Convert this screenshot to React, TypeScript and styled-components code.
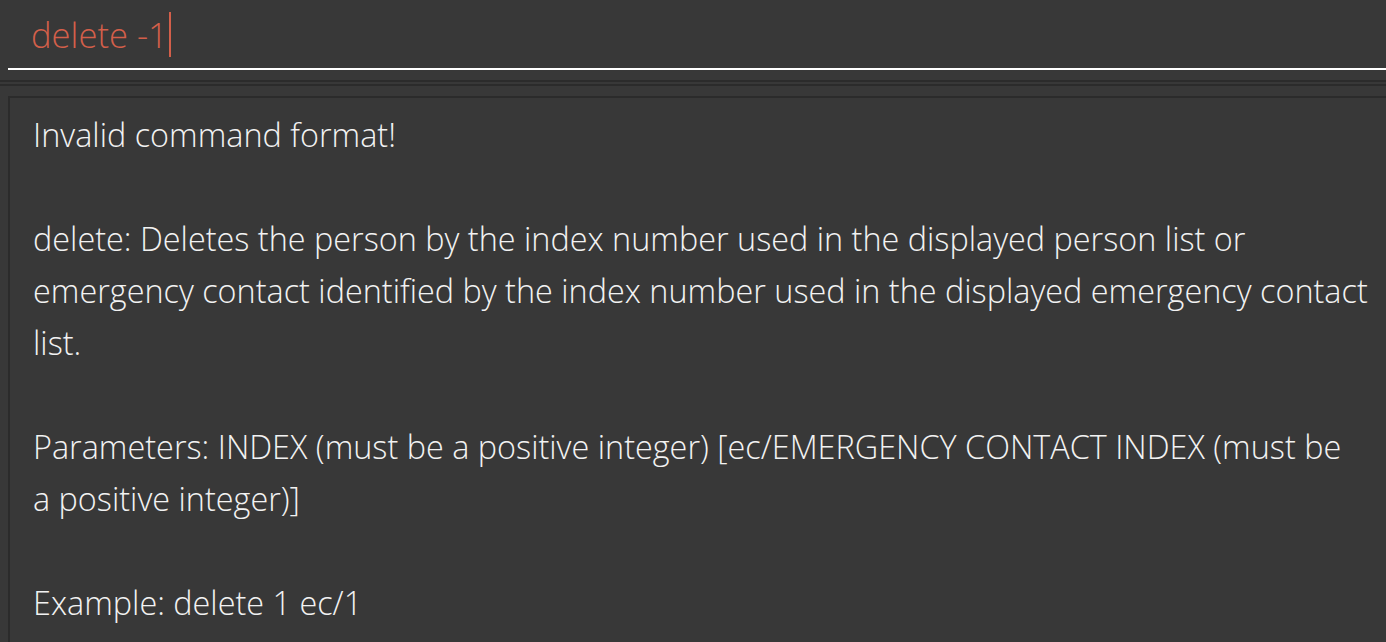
import React from "react";
import styled, { createGlobalStyle } from "styled-components";

const Global = createGlobalStyle`
  html, body { margin: 0; padding: 0; background: #383838; }
  body { width: 1386px; height: 642px; overflow: hidden; }
`;

const Page = styled.div`
  width: 1386px;
  height: 642px;
  background: #383838;
  display: flex;
  flex-direction: column;
  overflow: hidden;
`;

const CommandBar = styled.div`
  height: 68px;
  margin-left: 8px;
  border-bottom: 2px solid #ffffff;
  display: flex;
  align-items: center;
  padding-left: 23px;
  box-sizing: content-box;
`;

const CommandText = styled.span`
  font-family: "Open Sans", "Liberation Sans", sans-serif;
  font-weight: 300;
  font-size: 34.6px;
  color: #d35f4a;
  display: flex;
  align-items: center;
`;

const Caret = styled.span`
  width: 2px;
  height: 45px;
  background: #d35f4a;
  margin-left: 1px;
`;

const Divider = styled.div<{ $gap: number }>`
  height: 2px;
  background: #2b2b2b;
  margin-top: ${(p) => p.$gap}px;
`;

const ResultBox = styled.div`
  margin-top: 10px;
  margin-left: 8px;
  flex: 1;
  border-top: 2px solid #2b2b2b;
  border-left: 2px solid #2b2b2b;
  padding: 10px 0 0 23px;
`;

const ResultText = styled.div`
  font-family: "Open Sans", "Liberation Sans", sans-serif;
  font-weight: 300;
  font-size: 32.4px;
  line-height: 52px;
  color: #f2f2f2;
  white-space: pre-wrap;
  width: 1350px;
`;

const message = `Invalid command format!

delete: Deletes the person by the index number used in the displayed person list or emergency contact identified by the index number used in the displayed emergency contact list.

Parameters: INDEX (must be a positive integer) [ec/EMERGENCY CONTACT INDEX (must be a\u00a0positive integer)]

Example: delete 1 ec/1`;

export default function App() {
  return (
    <Page>
      <Global />
      <CommandBar>
        <CommandText>
          delete -1
          <Caret />
        </CommandText>
      </CommandBar>
      <Divider $gap={10} />
      <Divider $gap={2} />
      <ResultBox>
        <ResultText>{message}</ResultText>
      </ResultBox>
    </Page>
  );
}
